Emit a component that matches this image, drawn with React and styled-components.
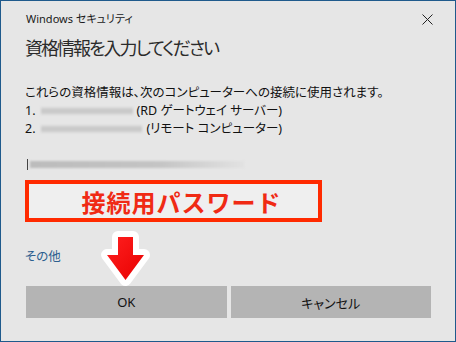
import React from 'react';
import styled, { createGlobalStyle } from 'styled-components';

const GlobalStyle = createGlobalStyle`
  html, body {
    margin: 0;
    padding: 0;
    background: #e6e6e6;
  }
  body {
    font-family: 'Noto Sans', 'Noto Sans CJK JP', sans-serif;
  }
`;

const Dialog = styled.div`
  position: relative;
  box-sizing: border-box;
  width: 456px;
  height: 342px;
  padding: 0 24px;
  background: #e6e6e6;
  border: 1px solid #1f5a8c;
  display: flex;
  flex-direction: column;
  color: #111;
  font-feature-settings: 'palt';
`;

const TitleBar = styled.div`
  display: flex;
  align-items: center;
  justify-content: space-between;
  height: 16px;
  margin-top: 10px;
`;

const TitleText = styled.span`
  font-size: 11px;
  line-height: 16px;
  color: #1a1a1a;
  margin-left: 1px;
`;

const CloseButton = styled.svg`
  width: 11px;
  height: 11px;
  margin-right: -2px;
`;

const Heading = styled.h1`
  margin: 7px 0 0;
  font-size: 18px;
  line-height: 28px;
  letter-spacing: -2px;
  font-weight: 400;
  color: #2b2b2b;
`;

const Message = styled.p`
  margin: ${(p) => (p.$first ? '22px' : '0')} 0 0;
  font-size: 12.5px;
  line-height: 18px;
  display: flex;
  align-items: center;
  white-space: nowrap;
`;

const Blurred = styled.span`
  display: inline-block;
  width: ${(p) => p.$w}px;
  height: 8px;
  margin: 0 ${(p) => p.$gap}px 0 5px;
  background: linear-gradient(#dcdcdc, #c4c4c4 50%, #dcdcdc);
  filter: blur(0.8px);
`;

const PasswordField = styled.div`
  margin-top: 20px;
  margin-left: 2px;
  width: 217px;
  height: 12px;
  display: flex;
  align-items: center;
`;

const Caret = styled.span`
  width: 1px;
  height: 11px;
  background: #444;
`;

const Smear = styled.span`
  flex: 1;
  height: 7px;
  margin-left: 2px;
  background: linear-gradient(90deg, #bcbcbc, #c4c4c4 60%, #e2e2e2);
  filter: blur(1px);
`;

const Callout = styled.div`
  box-sizing: border-box;
  margin-top: 10px;
  width: 297px;
  height: 42px;
  padding-left: 16px;
  border: 4px solid #ff2a00;
  background: #efefef;
  display: flex;
  align-items: center;
  justify-content: center;
  font-size: 24px;
  font-weight: 700;
  letter-spacing: 1px;
  color: #f02a14;
  font-feature-settings: normal;
`;

const MoreLink = styled.a`
  margin-top: 26px;
  align-self: flex-start;
  font-size: 12.5px;
  line-height: 18px;
  color: #2d5f8f;
  text-decoration: none;
`;

const ButtonRow = styled.div`
  display: grid;
  grid-template-columns: 1fr 1fr;
  gap: 4px;
  margin-top: 20px;
  margin-left: 1px;
`;

const Button = styled.button`
  height: 32px;
  border: none;
  background: #b4b4b4;
  font-family: inherit;
  font-size: 13px;
  font-weight: 400;
  color: #111;
  padding: 0;
  font-feature-settings: 'palt';
`;

const Arrow = styled.svg`
  position: absolute;
  left: 97px;
  top: 226px;
  width: 56px;
  height: 62px;
`;

export default function App() {
  const arrow = 'M20 10 H35 V28 H46 L27.5 53 L9 28 H20 Z';
  return (
    <>
      <GlobalStyle />
      <Dialog>
        <TitleBar>
          <TitleText>Windows セキュリティ</TitleText>
          <CloseButton viewBox="0 0 11 11">
            <path d="M0.5 0.5 L10.5 10.5 M10.5 0.5 L0.5 10.5" stroke="#222" strokeWidth="1" fill="none" />
          </CloseButton>
        </TitleBar>
        <Heading>資格情報を入力してください</Heading>
        <Message $first>これらの資格情報は、次のコンピューターへの接続に使用されます。</Message>
        <Message>
          1.<Blurred $w={92} $gap={4} />(RD ゲートウェイ サーバー)
        </Message>
        <Message>
          2.<Blurred $w={101} $gap={5} />(リモート コンピューター)
        </Message>
        <PasswordField>
          <Caret />
          <Smear />
        </PasswordField>
        <Callout>接続用パスワード</Callout>
        <MoreLink href="#">その他</MoreLink>
        <ButtonRow>
          <Button>OK</Button>
          <Button>キャンセル</Button>
        </ButtonRow>
        <Arrow viewBox="0 0 56 62">
          <defs>
            <linearGradient id="arrowRed" x1="0" y1="0" x2="1" y2="1">
              <stop offset="0" stopColor="#ff2020" />
              <stop offset="1" stopColor="#e80000" />
            </linearGradient>
          </defs>
          <path d={arrow} fill="#fff" stroke="#fff" strokeWidth="12" strokeLinejoin="round" />
          <path d={arrow} fill="url(#arrowRed)" />
        </Arrow>
      </Dialog>
    </>
  );
}
